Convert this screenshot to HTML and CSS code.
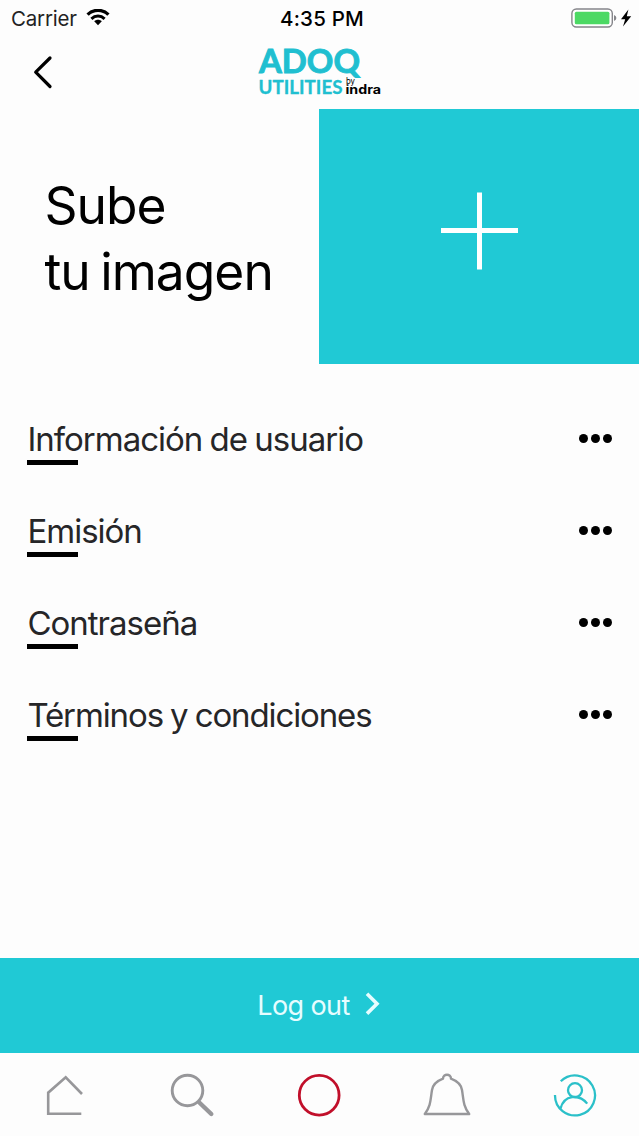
FILE: index.html
```html
<!DOCTYPE html>
<html lang="es">
<head>
    <meta charset="UTF-8">
    <meta name="viewport" content="width=device-width, initial-scale=1.0">
    <title>ADOQ Utilities</title>
    <link rel="stylesheet" href="styles.css">
</head>
<body>
    <div class="app">
        <div class="status-bar">
            <div class="status-left">
                <span class="carrier">Carrier</span>
                <svg class="wifi" width="24" height="18" viewBox="0 0 24 18">
                    <path d="M1.6 5.6 C7.4 0 16.6 0 22.4 5.6" fill="none" stroke="#000" stroke-width="3.4"/>
                    <path d="M5.4 9.8 C9.2 6.2 14.8 6.2 18.6 9.8" fill="none" stroke="#000" stroke-width="3"/>
                    <path d="M8.2 12.2 C10.4 10.2 13.6 10.2 15.8 12.2 L12 16.2Z"/>
                </svg>
            </div>
            <span class="clock">4:35 PM</span>
            <div class="status-right">
                <svg width="62" height="22" viewBox="0 0 62 22">
                    <rect x=".9" y="2" width="40.4" height="18" rx="4.5" fill="#fff" stroke="#85858a" stroke-width="1.4"/>
                    <rect x="3.8" y="4.8" width="34.6" height="12.4" rx="1.5" fill="#4cd964"/>
                    <path d="M43 8 Q45.4 9 45.4 11 Q45.4 13 43 14Z" fill="#85858a"/>
                    <path d="M57.4 2.6 L50 12.2 L54.2 12.2 L52 19.4 L60.2 9.2 L55.8 9.2Z"/>
                </svg>
            </div>
        </div>

        <header class="nav">
            <svg class="back" width="24" height="36" viewBox="0 0 24 36">
                <path d="M19 3 L4.7 17.2 L19 31.5" fill="none" stroke="#000" stroke-width="3.2" stroke-linecap="round" stroke-linejoin="round"/>
            </svg>
            <svg class="logo" width="130" height="56" viewBox="0 0 130 56">
                <text class="logo-main" x="4" y="28.3" textLength="101" lengthAdjust="spacingAndGlyphs">ADOQ</text>
                <text class="logo-sub" x="3.5" y="49" textLength="84" lengthAdjust="spacingAndGlyphs">UTILITIES</text>
                <text class="logo-by" x="91" y="39" textLength="9" lengthAdjust="spacingAndGlyphs">by</text>
                <text class="logo-brand" x="90.5" y="49" textLength="35.5" lengthAdjust="spacingAndGlyphs">indra</text>
            </svg>
        </header>

        <section class="hero">
            <h1>Sube<br>tu imagen</h1>
            <div class="upload">
                <svg width="78" height="78" viewBox="0 0 78 78">
                    <path d="M39.5 .5 V77.5 M1 38.5 H78" stroke="#fff" stroke-width="5"/>
                </svg>
            </div>
        </section>

        <ul class="menu">
            <li><span class="label">Información de usuario</span><span class="dots"><i></i><i></i><i></i></span></li>
            <li><span class="label">Emisión</span><span class="dots"><i></i><i></i><i></i></span></li>
            <li><span class="label">Contraseña</span><span class="dots"><i></i><i></i><i></i></span></li>
            <li><span class="label terms">Términos y condiciones</span><span class="dots"><i></i><i></i><i></i></span></li>
        </ul>

        <div class="logout">
            <span>Log out</span>
            <svg width="18" height="26" viewBox="0 0 18 26">
                <path d="M3 1.8 L13 11.7 L3 21.6" fill="none" stroke="#e6fdff" stroke-width="3.6"/>
            </svg>
        </div>

        <nav class="tabs">
            <!-- home -->
            <svg width="48" height="48" viewBox="0 0 48 48">
                <path d="M41.3 43.7 H8.2 V22.7 L25.7 7.3 L42 24" fill="none" stroke="#97979a" stroke-width="2.6"/>
            </svg>
            <!-- search -->
            <svg width="48" height="48" viewBox="0 0 48 48">
                <circle cx="19.5" cy="20.5" r="15.3" fill="none" stroke="#97979a" stroke-width="2.9"/>
                <path d="M31.3 32.5 L43.3 44" stroke="#97979a" stroke-width="4.4" stroke-linecap="round"/>
            </svg>
            <svg width="48" height="48" viewBox="0 0 48 48">
                <circle cx="24.2" cy="25.2" r="19.9" fill="none" stroke="#c10f2a" stroke-width="2.8"/>
            </svg>
            <!-- alerts -->
            <svg width="48" height="48" viewBox="0 0 48 48">
                <path d="M1.8 44 C8 36 7.5 29 9 20 C10 14 14 11 20 8.7 C20 3.5 28 3.5 28 8.7 C34 11 38 14 39 20 C40.5 29 40 36 46.2 44Z" fill="none" stroke="#97979a" stroke-width="2.4" stroke-linejoin="round"/>
            </svg>
            <!-- profile -->
            <svg width="48" height="48" viewBox="0 0 48 48">
                <g fill="none" stroke="#2bc0c9" stroke-width="2.3">
                    <path d="M9.8 11.3 A20 20 0 1 1 4 25"/>
                    <circle cx="24" cy="20.2" r="7"/>
                    <path d="M9.6 38.4 C13 25 28 23.5 36.2 33.6"/>
                </g>
            </svg>
        </nav>
    </div>
</body>
</html>
```

FILE: styles.css
```css
* {
    box-sizing: border-box;
}

body {
    margin: 0;
    background: #fdfdfd;
    font-family: Inter, "Liberation Sans", sans-serif;
    color: #000;
}

.app {
    width: 639px;
    height: 1136px;
    display: flex;
    flex-direction: column;
    overflow: hidden;
}

.status-bar {
    height: 36px;
    padding: 0 6px 0 11px;
    display: grid;
    grid-template-columns: 1fr auto 1fr;
    align-items: center;
}

.status-left {
    display: flex;
    align-items: center;
    gap: 9px;
}

.carrier {
    font-size: 20.5px;
    letter-spacing: -0.2px;
    color: #222;
}

.clock {
    font-size: 20.5px;
    font-weight: 500;
    letter-spacing: 0.2px;
}

.status-right {
    display: flex;
    justify-content: flex-end;
}

.nav {
    height: 73px;
    padding: 0 31px;
    display: grid;
    grid-template-columns: 1fr 130px 1fr;
    align-items: center;
}

.logo {
    overflow: visible;
}

.logo-main {
    font: 700 32px Lato, sans-serif;
    fill: #20bfd0;
    stroke: #20bfd0;
    stroke-width: 0.9px;
}

.logo-sub {
    font: 700 18.5px Lato, sans-serif;
    fill: #20bfd0;
    stroke: #20bfd0;
    stroke-width: 0.3px;
}

.logo-by {
    font: 400 9px Inter, sans-serif;
}

.logo-brand {
    font: 700 12.5px Inter, sans-serif;
}

.hero {
    height: 255px;
    display: grid;
    grid-template-columns: 319.4px 319.6px;
}

.hero h1 {
    margin: 0;
    padding: 63px 0 0 44.5px;
    font-size: 51.5px;
    font-weight: 420;
    line-height: 66px;
    letter-spacing: -1px;
    word-spacing: -3px;
    white-space: nowrap;
}

.upload {
    background: #20c9d5;
    display: flex;
    align-items: center;
    justify-content: center;
    padding-bottom: 12px;
}

.menu {
    flex: 1;
    margin: 0;
    padding: 55px 27px 0 27.4px;
    list-style: none;
}

.menu li {
    height: 92px;
    display: flex;
    justify-content: space-between;
    align-items: flex-start;
}

.label {
    font-size: 33px;
    line-height: 40px;
    letter-spacing: -1px;
    word-spacing: -1px;
    color: #262628;
}

.label.terms {
    letter-spacing: -1.12px;
}

.label::after {
    content: "";
    display: block;
    width: 51px;
    height: 5px;
    margin-top: 1px;
    background: #000;
}

.dots {
    display: flex;
    gap: 3px;
    padding-top: 15px;
}

.dots i {
    width: 9px;
    height: 9px;
    border-radius: 50%;
    background: #000;
}

.logout {
    height: 94.5px;
    background: #20c9d5;
    color: #e6fdff;
    display: flex;
    align-items: center;
    justify-content: center;
    gap: 14px;
    font-size: 27px;
    font-weight: 400;
    letter-spacing: -0.6px;
}

.tabs {
    height: 83.5px;
    display: grid;
    grid-template-columns: repeat(5, 1fr);
    justify-items: center;
    padding-top: 17.5px;
}
```
